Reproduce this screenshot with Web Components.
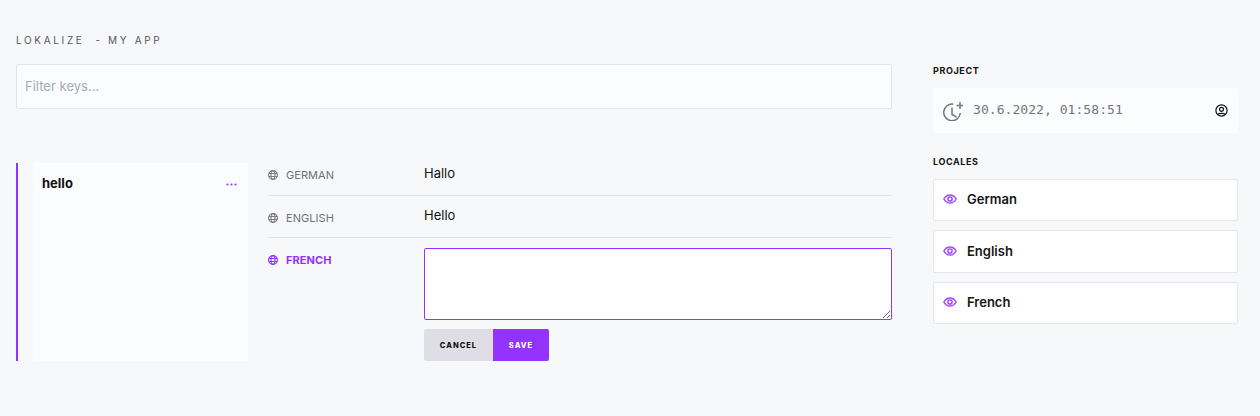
<!doctype html>
<html><head><meta charset="utf-8">
<style>
html,body{margin:0;background:#f7f8fa;font-family:Inter,"Liberation Sans",sans-serif;color:#111}
</style></head><body>
<app-shell>
  <filter-box slot="main"></filter-box>
  <key-row slot="main" name="hello">
    <locale-row label="German" value="Hallo"></locale-row>
    <locale-row label="English" value="Hello"></locale-row>
    <locale-edit label="French"></locale-edit>
  </key-row>
  <side-panel slot="side"></side-panel>
</app-shell>
<script>
const GLOBE=`<svg viewBox="0 0 10 10" width="10" height="10" fill="none" stroke="currentColor" stroke-width="1.100"><circle cx="5" cy="5" r="4.400"/><ellipse cx="5" cy="5" rx="2" ry="4.400"/><path d="M.8 3.500h8.400M.8 6.500h8.400"/></svg>`;
const EYE=`<svg viewBox="0 0 24 24" width="14" height="14" fill="none" stroke="currentColor" stroke-width="2.600"><path d="M1.500 12c2.500-4.500 6-7 10.500-7s8 2.500 10.500 7c-2.500 4.500-6 7-10.500 7s-8-2.500-10.500-7z"/><circle cx="12" cy="12" r="3.600"/></svg>`;
function def(name,html){customElements.define(name,class extends HTMLElement{
  constructor(){super();this.attachShadow({mode:"open"})}
  connectedCallback(){let h=html;for(const a of this.getAttributeNames())h=h.split("{"+a+"}").join(this.getAttribute(a));this.shadowRoot.innerHTML=h}
})}
def("app-shell",`<style>
:host{display:block;box-sizing:border-box;width:1260px;height:416px;overflow:hidden}
.w{display:flex;gap:41px;padding:0 22px 0 16px}
main{width:876px;flex:none;padding-top:34px}
h1{margin:0 0 17px;font-size:10px;line-height:13px;font-weight:400;letter-spacing:2.650px;color:#55575c;white-space:pre}
aside{width:305px;flex:none;padding-top:65px}
</style><div class="w"><main><h1>LOKALIZE  - MY APP</h1><slot name="main"></slot></main><aside><slot name="side"></slot></aside></div>`);
def("filter-box",`<style>
:host{display:block;margin-bottom:54px}
input{display:block;box-sizing:border-box;width:876px;height:45px;border:1px solid #e4e5e9;border-radius:2px;background:#fbfcfe;padding:0 8px 2px;font:13px Inter,sans-serif;letter-spacing:.02px;outline:none;color:#111}
input::placeholder{color:#a9abb0;opacity:1}
</style><input placeholder="Filter keys...">`);
def("key-row",`<style>
:host{display:flex;height:198px;border-left:2px solid #9233ff;padding-left:15px;gap:20px}
.c{box-sizing:border-box;width:215px;background:#fbfcfe;padding:13px 11px 0 9px;display:flex;justify-content:space-between;align-items:flex-start}
b{font-size:13px;line-height:15px;font-weight:700;color:#111}
svg{margin-top:7px;color:#9233ff}
.r{flex:1;min-width:0}
</style><div class="c"><b>{name}</b><svg width="11" height="3" viewBox="0 0 11 3" fill="currentColor"><circle cx="1.500" cy="1.500" r="1.050"/><circle cx="5.500" cy="1.500" r="1.050"/><circle cx="9.500" cy="1.500" r="1.050"/></svg></div><div class="r"><slot></slot></div>`);
const rowCss=`:host{display:block}
.lab{width:156px;flex:none;display:flex;align-items:center;gap:8px;font-size:11px;line-height:14px;letter-spacing:.05px;text-transform:uppercase;color:#6f7176;height:14px}
svg{flex:none;color:#7a7c80}`;
def("locale-row",`<style>${rowCss}
:host{border-bottom:1px solid #e2e3e7;height:42px;box-sizing:border-box}
:host(:first-child){height:33px}
.row{display:flex;height:100%;align-items:flex-start}
:host(:first-child) .lab{margin-top:5px}
:host(:first-child) .v{margin-top:2px}
.lab{margin-top:15px}
.v{font-size:13px;line-height:16px;margin-top:11px;color:#111}
</style><div class="row"><span class="lab">${GLOBE}<span>{label}</span></span><span class="v">{value}</span></div>`);
def("locale-edit",`<style>${rowCss}
:host{padding-top:10px}
.row{display:flex;align-items:flex-start}
.lab{color:#9233ff;font-weight:700;margin-top:5px}
svg{color:#9233ff}
.f{flex:1;min-width:0}
textarea{display:block;box-sizing:border-box;width:468px;height:72px;border:1px solid #9233ff;border-radius:2px;background:#fff;outline:none;margin:0;padding:6px}
.b{display:flex;margin-top:9px}
button{border:0;height:32px;padding:0;font:800 7.500px Inter,sans-serif;letter-spacing:1px;text-transform:uppercase}
.x{width:69px;background:#dfdee6;color:#111;border-radius:2px 0 0 2px}
.s{width:56px;background:#9233ff;color:#fff;border-radius:0 2px 2px 0}
</style><div class="row"><span class="lab">${GLOBE}<span>{label}</span></span><div class="f"><textarea></textarea><div class="b"><button class="x">Cancel</button><button class="s">Save</button></div></div></div>`);
def("locale-card",`<style>
:host{display:flex;box-sizing:border-box;height:42px;align-items:center;gap:10.500px;background:#fff;border:1px solid #e5e6ea;border-radius:2px;padding:0 0 2px 8.500px;margin-bottom:9px;font-size:13px;font-weight:600;color:#161616}
svg{color:#a04dff;flex:none}
</style>${EYE}<span>{label}</span>`);
def("side-panel",`<style>
:host{display:block}
h2{margin:0;font-size:9px;line-height:12px;font-weight:700;letter-spacing:.6px;color:#111}
.p{box-sizing:border-box;height:45px;margin:11px 0 23px;background:#fbfcfe;border-radius:2px;display:flex;align-items:center;padding:0 10px;color:#74767a}
.t{font:13.100px/16px "DejaVu Sans Mono",monospace;margin-left:10px;flex:1;margin-top:-1px}
.u{color:#111}
.l{margin-top:12px}
</style><h2>PROJECT</h2><div class="p"><svg width="20" height="20" viewBox="0 0 20 20" fill="none" stroke="currentColor" stroke-width="1.500"><path d="M10.300 3.200A8.300 8.300 0 1 0 17.300 12"/><path d="M9 6.500v7l4.500 2.500"/><path d="M17 1v7M13.500 4.500h7"/></svg><span class="t">30.6.2022, 01:58:51</span><svg class="u" width="13" height="13" viewBox="0 0 13 13" fill="none" stroke="currentColor" stroke-width="1.200"><circle cx="6.500" cy="6.500" r="5.600"/><circle cx="6.500" cy="5.300" r="2"/><path d="M2.800 10.500c1-1.500 6.400-1.500 7.400 0"/></svg></div>
<h2 class="l">LOCALES</h2><div style="height:11px"></div><locale-card label="German"></locale-card><locale-card label="English" style="height:43px"></locale-card><locale-card label="French"></locale-card>`);
</script>
</body></html>
